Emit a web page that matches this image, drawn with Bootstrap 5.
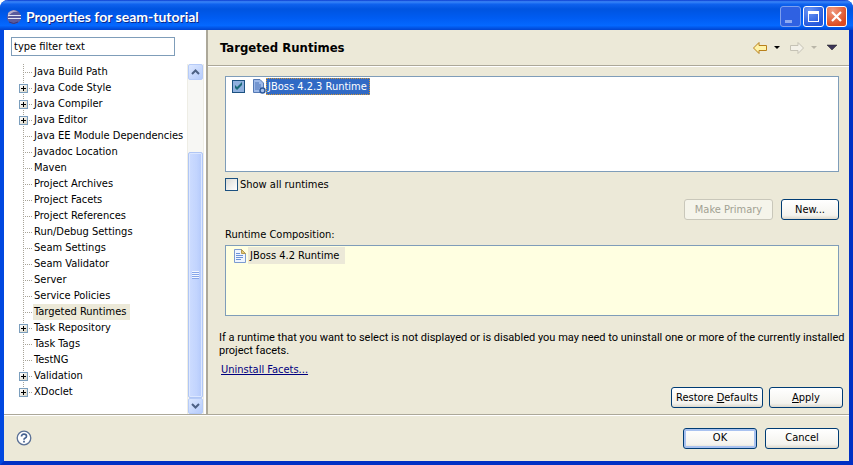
<!DOCTYPE html>
<html lang="en">
<head>
<meta charset="utf-8">
<meta name="viewport" content="width=device-width, initial-scale=1">
<title>Properties for seam-tutorial</title>
<link rel="stylesheet" href="https://cdn.jsdelivr.net/npm/bootstrap@5.3.0/dist/css/bootstrap.min.css">
<style>
body{font:11px/13px "DejaVu Sans Condensed","Noto Sans",sans-serif;color:#000;background:#fff}
.dialog{background:#ece9d8;border:solid #0148e0;border-width:0 4px 4px;border-radius:8px 8px 0 0;background-clip:padding-box}
.dialog{border-right-color:#0030c4;border-bottom-color:#0030c4}
.titlebar{height:30px;margin:0 -4px;padding:3px 6px 0 6px;background:linear-gradient(#0a3bd0 0,#3a86f8 6%,#0f62ee 14%,#0054e0 30%,#005cf2 60%,#0468ff 85%,#0044d0 100%);border-radius:8px 8px 0 0}
.titlebar h1{font:bold 14px/18px "Lato","Open Sans",sans-serif;color:#fff;text-shadow:1px 1px #0a2a8c}
.winbtns{gap:2px}
.winbtn{width:21px;height:21px;padding:0;border:1px solid #fff;border-radius:3px;background:radial-gradient(circle at 30% 20%,#6b95f5,#2458dc 75%)}
.winbtn-dim{border-color:#7d9fee;background:#2f61e2}
.winbtn-close{background:radial-gradient(circle at 30% 20%,#f09a80,#dc4a20 75%)}
.winbtn svg,.sb-btn svg{display:block}
.side{width:204px;background:#fff;border-right:2px solid #aca899}
.filter{width:164px;height:19px;margin:7px 0 8px 7px;padding:0 2px;border:1px solid #7f9db9;border-radius:0;font-size:11px;color:#000}
.tree{list-style:none;margin:0;padding:0}
.tree li{height:16px;padding-left:15px;display:flex;align-items:center;white-space:nowrap;
 background:repeating-linear-gradient(#a8a498 0 1px,transparent 1px 2px) 19px 0/1px 16px no-repeat,
 repeating-linear-gradient(90deg,#a8a498 0 1px,transparent 1px 2px) 19px 8px/10px 1px no-repeat}
.tree li:last-child{background-size:1px 8px,10px 1px}
.tree .twig{width:9px;height:9px;flex:none;padding:0;border:1px solid #7b9ebd;margin-right:5px;
 background:linear-gradient(#000,#000) center/5px 1px no-repeat,linear-gradient(#000,#000) center/1px 5px no-repeat,linear-gradient(135deg,#fff,#d8d4c4)}
.tree .leaf{width:9px;margin-right:5px;flex:none}
.tree a{color:#000;text-decoration:none;line-height:16px;padding:0 4px 0 1px}
.tree a.current{background:#ece9d8}
.scroller{width:17px;margin-right:2px;background:#f7f7f4;border:solid #eeede5;border-width:0 1px}
.sb-btn{width:15px;height:16px;padding:0;border:1px solid #b6cbf8;border-radius:2px;background:linear-gradient(135deg,#dde8ff,#b5cbfb)}
.sb-lead{flex:72 0 0}
.sb-thumb{flex:245 0 0;width:15px;border:1px solid #b0c6f5;border-radius:2px;background:linear-gradient(90deg,#cddcff,#c2d4fe 60%,#b4c9fb);box-shadow:inset 0 0 0 1px #dce7ff}
.grip{width:7px;height:8px;background:repeating-linear-gradient(#f4f8ff 0 1px,#86a6ea 1px 2px)}
.heading{height:36px;padding:0 11px 0 12px;border-bottom:1px solid #aca899;box-shadow:0 1px #fff}
.heading h2{font:bold 13px/16px "DejaVu Sans Condensed","Noto Sans",sans-serif}
.toolbtn{padding:0;border:0;background:none;display:flex}
.page-body{padding:10px 10px 0 17px}
.runtimes{height:96px;border:1px solid #7f9db9;background:#fff;padding:1px 6px}
.composition{height:71px;border:1px solid #7f9db9;background:#ffffe1;padding:1px 7px;margin-top:4px}
.show-all{margin-top:6px;gap:2px}
.tick{appearance:none;width:13px;height:13px;margin:0;border:1px solid #1c5180;background:linear-gradient(135deg,#dcdcd7,#fff)}
.tick.picked:checked{background:#8fb0de url("data:image/svg+xml,%3Csvg xmlns='http://www.w3.org/2000/svg' viewBox='0 0 11 11'%3E%3Cpath d='M2 4v3l2 2 5-5V1L4 6z' fill='%231a6a78'/%3E%3C/svg%3E")}
.chosen{background:#316ac5;color:#fff;outline:1px dotted #ce953a;outline-offset:-1px;line-height:17px;padding:0 3px 0 2px}
.soft{background:#ece9d8;line-height:17px;padding:0 6px 0 2px}
.doc-row{gap:2px}
.xp{height:21px;padding:0 3px;border:1px solid #003c74;border-radius:3px;background:linear-gradient(#fff,#f4f3ee 80%,#dcd8cc);font-size:11px;line-height:18px;color:#000;text-align:center;white-space:nowrap}
.xp:disabled{border-color:#c9c7ba;background:#f5f4ea;color:#a1a192}
.xp-default{box-shadow:inset 0 0 0 2px #a9c2f0}
.w-a{width:89px}.w-b{width:58px}.w-c{width:92px}.w-d{width:74px}
.note{margin:15px -8px 6px -6px;font-family:Roboto,sans-serif}
.uninstall{color:#00007f;margin-left:-4px}
.action-row{padding:11px 6px 6px;gap:6px}
.footer-bar{height:47px;border-top:1px solid #aca899;box-shadow:inset 0 1px #fff;padding:0 10px 0 12px}
</style>
<script src="https://cdn.jsdelivr.net/npm/bootstrap@5.3.0/dist/js/bootstrap.bundle.min.js"></script>
</head>
<body>
<div class="dialog d-flex flex-column min-vh-100">
 <header class="titlebar d-flex align-items-center">
  <svg width="16" height="16" viewBox="0 0 16 16" aria-hidden="true"><circle cx="8" cy="8" r="7" fill="#5a5a9c"/><path d="M2 4A7 7 0 0 1 12 3C8 2 4 4 2 8z" fill="#b9b0cc"/><path d="M2 6.500h13M2 9.500h13" stroke="#e6e6f4"/><path d="M3 13q5 3 9 0" stroke="#35357c" fill="none"/></svg>
  <h1 class="mb-0 ms-1 me-auto">Properties for seam-tutorial</h1>
  <div class="winbtns d-flex">
   <button class="winbtn winbtn-dim" type="button" aria-label="Minimize"><svg width="19" height="19"><path d="M4 13h7v3H4z" fill="#8fabf2"/></svg></button>
   <button class="winbtn" type="button" aria-label="Maximize"><svg width="19" height="19"><path d="M4 4h11v11H4zM5 7v7h9V7z" fill="#fff" fill-rule="evenodd"/></svg></button>
   <button class="winbtn winbtn-close" type="button" aria-label="Close"><svg width="19" height="19"><path d="M5 5l9 9M14 5l-9 9" stroke="#fff" stroke-width="2.200"/></svg></button>
  </div>
 </header>

 <main class="d-flex flex-grow-1">
  <nav class="side d-flex flex-column flex-shrink-0" aria-label="Property pages">
   <input class="filter" type="text" value="type filter text" aria-label="Filter">
   <div class="d-flex flex-grow-1">
    <ul class="tree flex-grow-1">
     <li><span class="leaf"></span><a href="#">Java Build Path</a></li>
     <li><button class="twig" type="button" aria-label="Expand"></button><a href="#">Java Code Style</a></li>
     <li><button class="twig" type="button" aria-label="Expand"></button><a href="#">Java Compiler</a></li>
     <li><button class="twig" type="button" aria-label="Expand"></button><a href="#">Java Editor</a></li>
     <li><span class="leaf"></span><a href="#">Java EE Module Dependencies</a></li>
     <li><span class="leaf"></span><a href="#">Javadoc Location</a></li>
     <li><span class="leaf"></span><a href="#">Maven</a></li>
     <li><span class="leaf"></span><a href="#">Project Archives</a></li>
     <li><span class="leaf"></span><a href="#">Project Facets</a></li>
     <li><span class="leaf"></span><a href="#">Project References</a></li>
     <li><span class="leaf"></span><a href="#">Run/Debug Settings</a></li>
     <li><span class="leaf"></span><a href="#">Seam Settings</a></li>
     <li><span class="leaf"></span><a href="#">Seam Validator</a></li>
     <li><span class="leaf"></span><a href="#">Server</a></li>
     <li><span class="leaf"></span><a href="#">Service Policies</a></li>
     <li><span class="leaf"></span><a href="#" class="current" aria-current="page">Targeted Runtimes</a></li>
     <li><button class="twig" type="button" aria-label="Expand"></button><a href="#">Task Repository</a></li>
     <li><span class="leaf"></span><a href="#">Task Tags</a></li>
     <li><span class="leaf"></span><a href="#">TestNG</a></li>
     <li><button class="twig" type="button" aria-label="Expand"></button><a href="#">Validation</a></li>
     <li><button class="twig" type="button" aria-label="Expand"></button><a href="#">XDoclet</a></li>
    </ul>
    <div class="scroller d-flex flex-column">
     <button class="sb-btn" type="button" aria-label="Scroll up"><svg width="13" height="14"><path d="M3 9l3.500-3.500L10 9" stroke="#4d6185" stroke-width="2" fill="none"/></svg></button>
     <div class="sb-lead"></div>
     <div class="sb-thumb d-flex align-items-center justify-content-center"><div class="grip"></div></div>
     <button class="sb-btn" type="button" aria-label="Scroll down"><svg width="13" height="14"><path d="M3 5l3.500 3.500L10 5" stroke="#4d6185" stroke-width="2" fill="none"/></svg></button>
    </div>
   </div>
  </nav>

  <section class="flex-grow-1 d-flex flex-column">
   <div class="heading d-flex align-items-center">
    <h2 class="mb-0 me-auto">Targeted Runtimes</h2>
    <button class="toolbtn" type="button" aria-label="Back"><svg width="16" height="14"><path d="M1.500 7L7 1.500V4.500h7.500v5H7v3z" fill="#fff3a8" stroke="#b8801c"/></svg></button>
    <button class="toolbtn ms-1" type="button" aria-label="Back history"><svg width="9" height="6"><path d="M2 1h6L5 4z"/></svg></button>
    <button class="toolbtn ms-2" type="button" aria-label="Forward" disabled><svg width="16" height="14"><path d="M14.500 7L9 1.500V4.500H1.500v5H9v3z" fill="#f3f1e8" stroke="#c5c2b5"/></svg></button>
    <button class="toolbtn ms-1" type="button" aria-label="Forward history" disabled><svg width="9" height="6"><path d="M2 1h6L5 4z" fill="#b9b6a8"/></svg></button>
    <button class="toolbtn ms-2" type="button" aria-label="View menu"><svg width="12" height="7"><path d="M1 1h10L6 6z" fill="#3c3558" stroke="#222" stroke-width=".5"/></svg></button>
   </div>

   <div class="page-body d-flex flex-column flex-grow-1">
    <div class="runtimes">
     <label class="d-flex align-items-center">
      <input class="tick picked" type="checkbox" checked>
      <svg class="ms-2" width="13" height="15" viewBox="0 0 13 15" aria-hidden="true"><path d="M.5.5H7L10.500 4v9.500H.5z" fill="#9db9e8" stroke="#5479b4"/><path d="M2 4h4M2 6h6M2 8h6M2 10h4" stroke="#4a72b8"/><circle cx="9.500" cy="11.500" r="2.500" fill="#a8c4ee" stroke="#2f5a9c" stroke-width="1.500"/></svg>
      <span class="chosen">JBoss 4.2.3 Runtime</span>
     </label>
    </div>
    <label class="show-all d-flex align-items-center"><input class="tick" type="checkbox">Show all runtimes</label>
    <div class="d-flex justify-content-end gap-2 pt-2">
     <button class="xp w-a" type="button" disabled>Make Primary</button>
     <button class="xp w-b" type="button">New...</button>
    </div>
    <div class="pt-2">Runtime Composition:</div>
    <div class="composition">
     <div class="doc-row d-flex align-items-center"><svg width="13" height="14" viewBox="0 0 13 14" aria-hidden="true"><path d="M1.500.500H8.500L12.500 4.500v9H1.500z" fill="#eff5ff" stroke="#7c9bd0"/><path d="M8.500.5v4h4z" fill="#e5c977" stroke="#b49a4f"/><path d="M3 4.500h4M3 6.500h7M3 8.500h7M3 10.500h5" stroke="#6c93d6"/></svg><span class="soft">JBoss 4.2 Runtime</span></div>
    </div>
    <p class="note">If a runtime that you want to select is not displayed or is disabled you may need to uninstall one or more of the currently installed project facets.</p>
    <div><a class="uninstall" href="#">Uninstall Facets...</a></div>
   </div>
   <div class="action-row d-flex justify-content-end">
    <button class="xp w-c" type="button">Restore <u>D</u>efaults</button>
    <button class="xp w-d" type="button"><u>A</u>pply</button>
   </div>
  </section>
 </main>

 <footer class="footer-bar d-flex align-items-center">
  <button class="toolbtn me-auto" type="button" aria-label="Help"><svg width="16" height="16"><circle cx="8" cy="8" r="6.800" fill="#fff" stroke="#5b7196" stroke-width="1.300"/><path d="M5.500 6.500q0-2.300 2.500-2.300t2.500 2q0 1.200-1.300 1.900Q8 8.700 8 9.800M8 10.800v1.800" stroke="#44608f" stroke-width="1.700" fill="none"/></svg></button>
  <button class="xp xp-default w-d" type="button">OK</button>
  <button class="xp w-d ms-2" type="button">Cancel</button>
 </footer>
</div>
</body>
</html>
